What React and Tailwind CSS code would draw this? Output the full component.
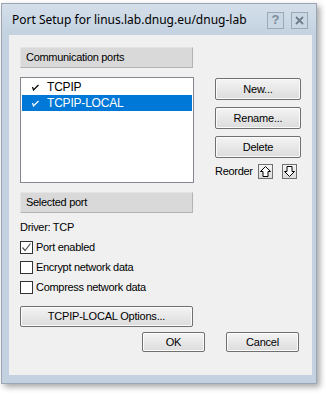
import React from 'react';

const font = { fontFamily: '"Liberation Sans", Arial, sans-serif' };

function Btn({ children, className = '' }) {
  return (
    <div
      className={`flex items-center justify-center border border-[#707070] rounded-[2px] bg-gradient-to-b from-[#f4f4f4] to-[#dcdcdc] shadow-[inset_0_0_0_1px_#fbfbfb] text-[11px] text-black tracking-[-0.2px] ${className}`}
    >
      {children}
    </div>
  );
}

function SectionBar({ title }) {
  return (
    <div className="h-[21px] w-[173px] bg-[#d9d9d9] border-r border-b border-[#b4b4b4] border-t border-l border-t-[#e4e4e4] border-l-[#e4e4e4] flex items-center pl-[5px] text-[11px] tracking-[-0.3px] text-black">
      {title}
    </div>
  );
}

function ListCheck({ color }) {
  return (
    <svg width="8" height="7" viewBox="0 0 8 7" className="shrink-0">
      <path d="M1.5 3 L2.5 6 L7.5 1" fill="none" stroke={color} strokeWidth="1.2" />
    </svg>
  );
}

function CheckBox({ checked, label }) {
  return (
    <div className="flex items-center h-[14px]">
      <div className="w-[13px] h-[13px] border border-[#333] bg-white flex items-center justify-center">
        {checked && (
          <svg width="11" height="11" viewBox="0 0 11 11">
            <path d="M1.5 5.5 L4 8.5 L9.5 1.5" fill="none" stroke="#555" strokeWidth="1.2" />
          </svg>
        )}
      </div>
      <span className="ml-[3px] text-[11px] tracking-[-0.3px] text-black">{label}</span>
    </div>
  );
}

function ArrowBtn({ up }) {
  return (
    <div className="w-[15px] h-[15px] border border-[#707070] bg-gradient-to-b from-[#f4f4f4] to-[#dcdcdc] flex items-center justify-center">
      <svg width="11" height="11" viewBox="0 0 11 11">
        <path
          d={up ? 'M5.5 0.5 L10.5 5.5 L8 5.5 L8 10.5 L3 10.5 L3 5.5 L0.5 5.5 Z' : 'M5.5 10.5 L10.5 5.5 L8 5.5 L8 0.5 L3 0.5 L3 5.5 L0.5 5.5 Z'}
          fill="white"
          stroke="black"
          strokeWidth="1"
        />
      </svg>
    </div>
  );
}

export default function App() {
  return (
    <div className="w-[326px] h-[396px] bg-white pt-[3px] pl-[1px]" style={font}>
      <div className="w-[316px] h-[381px] border border-[#9ba6b2] bg-[#c3d1e0] flex flex-col shadow-[3px_3px_6px_rgba(0,0,0,0.35)]">
        {/* Title bar */}
        <div className="h-[31px] flex items-center pl-[10px] pr-[8px] bg-gradient-to-b from-[#d4dfea] to-[#c3d1e0]">
          <span className="text-[12px] text-black" style={{ fontFamily: '"Noto Sans", "Open Sans", sans-serif' }}>
            Port Setup for linus.lab.dnug.eu/dnug-lab
          </span>
          <div className="ml-auto flex gap-[7px] mt-[1px]">
            <div className="w-[17px] h-[17px] border border-[#9aa8b8] bg-[#c9d6e3] flex items-center justify-center text-[13px] font-bold text-[#7d8a99]">
              ?
            </div>
            <div className="w-[17px] h-[17px] border border-[#9aa8b8] bg-[#c9d6e3] flex items-center justify-center">
              <svg width="9" height="9" viewBox="0 0 9 9">
                <path d="M1 1 L8 8 M8 1 L1 8" stroke="#6f7c8b" strokeWidth="1.8" />
              </svg>
            </div>
          </div>
        </div>

        {/* Content */}
        <div className="ml-[7px] mr-[4px] w-[303px] h-[340px] bg-[#f0f0f0] flex flex-col pl-[11px] pt-[12px]">
          <div className="flex">
            {/* Left column */}
            <div className="flex flex-col w-[174px]">
              <SectionBar title="Communication ports" />
              <div className="mt-[9px] h-[106px] border border-[#828790] bg-white p-[1px] text-[12px]">
                <div className="h-[16px] flex items-center pl-[9px]">
                  <ListCheck color="#000" />
                  <span className="ml-[8px] text-black tracking-[-0.2px]">TCPIP</span>
                </div>
                <div className="h-[16px] flex items-center pl-[9px] bg-[#0078d7]">
                  <ListCheck color="#fff" />
                  <span className="ml-[8px] text-white tracking-[-0.2px]">TCPIP-LOCAL</span>
                </div>
              </div>
              <div className="mt-[9px]">
                <SectionBar title="Selected port" />
              </div>
              <div className="mt-[8px] text-[11px] tracking-[-0.3px] text-black h-[13px] leading-[13px]">Driver: TCP</div>
              <div className="mt-[6px] flex flex-col gap-[6px]">
                <CheckBox checked label="Port enabled" />
                <CheckBox label="Encrypt network data" />
                <CheckBox label="Compress network data" />
              </div>
              <Btn className="mt-[12px] h-[21px] w-[173px]">TCPIP-LOCAL Options...</Btn>
            </div>

            {/* Right column */}
            <div className="ml-[21px] mt-[31px] flex flex-col gap-[7px] w-[86px]">
              <Btn className="h-[22px]">New...</Btn>
              <Btn className="h-[22px]">Rename...</Btn>
              <Btn className="h-[22px]">Delete</Btn>
              <div className="flex items-center mt-[-2px]">
                <span className="text-[11px] tracking-[-0.3px] text-black">Reorder</span>
                <div className="ml-[5px] flex gap-[9px]">
                  <ArrowBtn up />
                  <ArrowBtn />
                </div>
              </div>
            </div>
          </div>

          {/* OK / Cancel */}
          <div className="flex mt-[5px] pl-[122px] gap-[21px]">
            <Btn className="h-[20px] w-[63px]">OK</Btn>
            <Btn className="h-[20px] w-[73px]">Cancel</Btn>
          </div>
        </div>
      </div>
    </div>
  );
}
